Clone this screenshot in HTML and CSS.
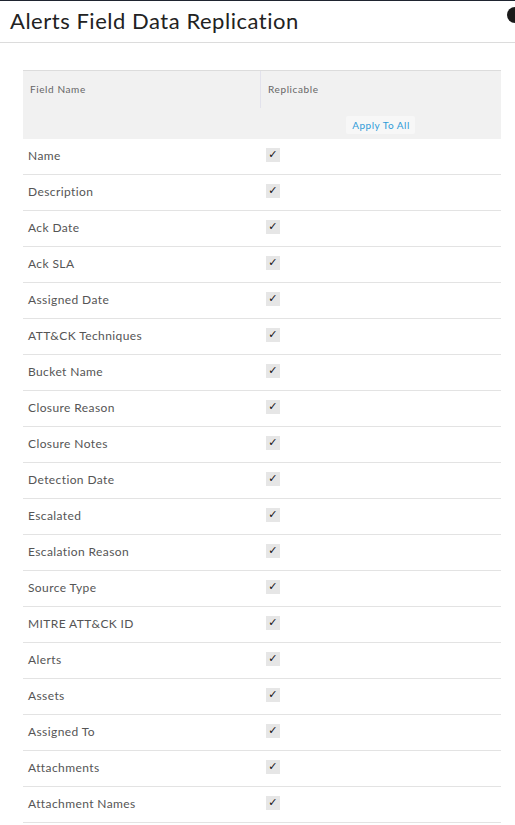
FILE: index.html
```html
<!DOCTYPE html>
<html>
<head>
<meta charset="utf-8">
<link rel="stylesheet" href="styles.css">
</head>
<body>
<div class="topline"></div>
<header class="header">
  <h1 class="title">Alerts Field Data Replication</h1>
  <span class="close-dot"></span>
</header>
<main class="content">
  <div class="table">
    <div class="thead">
      <div class="th th-name">Field Name</div>
      <div class="th th-rep">
        <div class="th-label">Replicable</div>
        <div class="apply-wrap"><button class="apply">Apply To All</button></div>
      </div>
    </div>
    <div class="row"><div class="cell">Name</div><div class="cell cell-check"><span class="check">&#10003;</span></div></div>
    <div class="row"><div class="cell">Description</div><div class="cell cell-check"><span class="check">&#10003;</span></div></div>
    <div class="row"><div class="cell">Ack Date</div><div class="cell cell-check"><span class="check">&#10003;</span></div></div>
    <div class="row"><div class="cell">Ack SLA</div><div class="cell cell-check"><span class="check">&#10003;</span></div></div>
    <div class="row"><div class="cell">Assigned Date</div><div class="cell cell-check"><span class="check">&#10003;</span></div></div>
    <div class="row"><div class="cell">ATT&amp;CK Techniques</div><div class="cell cell-check"><span class="check">&#10003;</span></div></div>
    <div class="row"><div class="cell">Bucket Name</div><div class="cell cell-check"><span class="check">&#10003;</span></div></div>
    <div class="row"><div class="cell">Closure Reason</div><div class="cell cell-check"><span class="check">&#10003;</span></div></div>
    <div class="row"><div class="cell">Closure Notes</div><div class="cell cell-check"><span class="check">&#10003;</span></div></div>
    <div class="row"><div class="cell">Detection Date</div><div class="cell cell-check"><span class="check">&#10003;</span></div></div>
    <div class="row"><div class="cell">Escalated</div><div class="cell cell-check"><span class="check">&#10003;</span></div></div>
    <div class="row"><div class="cell">Escalation Reason</div><div class="cell cell-check"><span class="check">&#10003;</span></div></div>
    <div class="row"><div class="cell">Source Type</div><div class="cell cell-check"><span class="check">&#10003;</span></div></div>
    <div class="row"><div class="cell">MITRE ATT&amp;CK ID</div><div class="cell cell-check"><span class="check">&#10003;</span></div></div>
    <div class="row"><div class="cell">Alerts</div><div class="cell cell-check"><span class="check">&#10003;</span></div></div>
    <div class="row"><div class="cell">Assets</div><div class="cell cell-check"><span class="check">&#10003;</span></div></div>
    <div class="row"><div class="cell">Assigned To</div><div class="cell cell-check"><span class="check">&#10003;</span></div></div>
    <div class="row"><div class="cell">Attachments</div><div class="cell cell-check"><span class="check">&#10003;</span></div></div>
    <div class="row"><div class="cell">Attachment Names</div><div class="cell cell-check"><span class="check">&#10003;</span></div></div>
  </div>
</main>
</body>
</html>
```
FILE: styles.css
```css
html, body {
  margin: 0;
  padding: 0;
  background: #fff;
  font-family: Lato, "Open Sans", "Liberation Sans", sans-serif;
  overflow: hidden;
}
.topline {
  height: 1px;
  background: #1f2430;
}
.header {
  position: relative;
  height: 41px;
  border-bottom: 1px solid #dcdcdc;
  display: flex;
  align-items: center;
  padding-left: 10px;
}
.title {
  margin: 0;
  font-size: 22px;
  font-weight: 400;
  color: #222;
  letter-spacing: 0.53px;
  line-height: 1;
  position: relative;
  top: -1px;
}
.close-dot {
  position: absolute;
  right: -8px;
  top: 6px;
  width: 16px;
  height: 16px;
  border-radius: 50%;
  background: #1a1a1a;
}
.content {
  padding: 27px 14px 0 23px;
}
.table {
  width: 478px;
}
.thead {
  display: grid;
  grid-template-columns: 237px 1fr;
  background: #f1f1f1;
  border-top: 1px solid #dcdcdc;
  height: 68px;
}
.th {
  font-size: 10px;
  color: #666;
  letter-spacing: 0.6px;
}
.th-name {
  padding: 12px 0 0 7px;
}
.th-rep {
  display: flex;
  flex-direction: column;
}
.th-label {
  border-left: 1px solid #e2e2ec;
  padding: 12px 0 0 7px;
  height: 25px;
}
.apply-wrap {
  display: flex;
  justify-content: center;
  padding-top: 8px;
}
.apply {
  font-family: inherit;
  font-size: 10px;
  letter-spacing: 0.5px;
  color: #2f9bd8;
  background: #f7f7f7;
  border: none;
  border-radius: 2px;
  padding: 3px 5px 3px 6px;
  line-height: 12px;
}
.row {
  display: grid;
  grid-template-columns: 237px 1fr;
  height: 35px;
  border-bottom: 1px solid #e3e3e3;
  align-items: center;
}
.cell {
  font-size: 12px;
  color: #555;
  letter-spacing: 0.4px;
  padding-left: 5px;
  padding-bottom: 2px;
}
.cell-check {
  padding-left: 6px;
  padding-bottom: 3px;
  display: flex;
}
.check {
  width: 14px;
  height: 14px;
  background: #e6e6e6;
  color: #111;
  font-size: 11px;
  font-weight: 700;
  line-height: 14px;
  text-align: center;
  font-family: "DejaVu Sans", sans-serif;
}
```
